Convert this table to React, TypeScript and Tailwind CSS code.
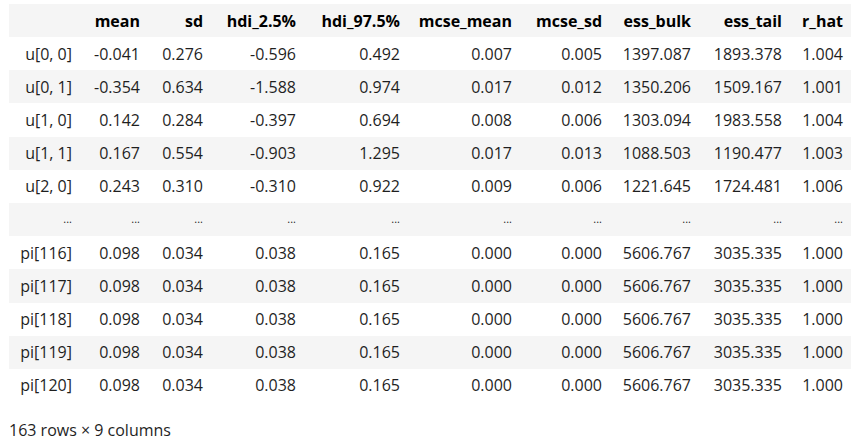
const columns = [
  "mean",
  "sd",
  "hdi_2.5%",
  "hdi_97.5%",
  "mcse_mean",
  "mcse_sd",
  "ess_bulk",
  "ess_tail",
  "r_hat",
];

const widths = [
  "w-[71px]",
  "w-[68px]",
  "w-[63px]",
  "w-[93px]",
  "w-[104px]",
  "w-[112px]",
  "w-[90px]",
  "w-[89px]",
  "w-[91px]",
  "w-[61px]",
];

const rows: [string, string[]][] = [
  ["u[0, 0]", ["-0.041", "0.276", "-0.596", "0.492", "0.007", "0.005", "1397.087", "1893.378", "1.004"]],
  ["u[0, 1]", ["-0.354", "0.634", "-1.588", "0.974", "0.017", "0.012", "1350.206", "1509.167", "1.001"]],
  ["u[1, 0]", ["0.142", "0.284", "-0.397", "0.694", "0.008", "0.006", "1303.094", "1983.558", "1.004"]],
  ["u[1, 1]", ["0.167", "0.554", "-0.903", "1.295", "0.017", "0.013", "1088.503", "1190.477", "1.003"]],
  ["u[2, 0]", ["0.243", "0.310", "-0.310", "0.922", "0.009", "0.006", "1221.645", "1724.481", "1.006"]],
  ["...", ["...", "...", "...", "...", "...", "...", "...", "...", "..."]],
  ["pi[116]", ["0.098", "0.034", "0.038", "0.165", "0.000", "0.000", "5606.767", "3035.335", "1.000"]],
  ["pi[117]", ["0.098", "0.034", "0.038", "0.165", "0.000", "0.000", "5606.767", "3035.335", "1.000"]],
  ["pi[118]", ["0.098", "0.034", "0.038", "0.165", "0.000", "0.000", "5606.767", "3035.335", "1.000"]],
  ["pi[119]", ["0.098", "0.034", "0.038", "0.165", "0.000", "0.000", "5606.767", "3035.335", "1.000"]],
  ["pi[120]", ["0.098", "0.034", "0.038", "0.165", "0.000", "0.000", "5606.767", "3035.335", "1.000"]],
];

export default function App() {
  return (
    <div className="w-[852px] h-[445px] bg-white overflow-hidden pt-[4px] pl-[9px] text-[16px] text-[#1f1f1f] font-['Open_Sans',sans-serif]">
      <table className="table-fixed border-collapse w-[842px]">
        <colgroup>
          {widths.map((w, i) => (
            <col key={i} className={w} />
          ))}
        </colgroup>
        <thead>
          <tr className="h-[33px] bg-[#f5f5f5]">
            <th />
            {columns.map((c) => (
              <th key={c} className="text-right pr-[8px] font-bold text-black whitespace-nowrap">
                {c}
              </th>
            ))}
          </tr>
        </thead>
        <tbody>
          {rows.map(([idx, vals], r) => {
            const dots = idx === "...";
            return (
              <tr key={r} className={`h-[33.2px] ${r % 2 === 1 ? "bg-[#f5f5f5]" : "bg-white"}`}>
                <th className={`text-right pr-[8px] font-normal whitespace-nowrap ${dots ? "text-[11px]" : ""}`}>
                  {idx}
                </th>
                {vals.map((v, i) => (
                  <td key={i} className={`text-right pr-[8px] whitespace-nowrap ${dots ? "text-[11px]" : ""}`}>
                    {v}
                  </td>
                ))}
              </tr>
            );
          })}
        </tbody>
      </table>
      <p className="mt-[16px]">163 rows × 9 columns</p>
    </div>
  );
}
